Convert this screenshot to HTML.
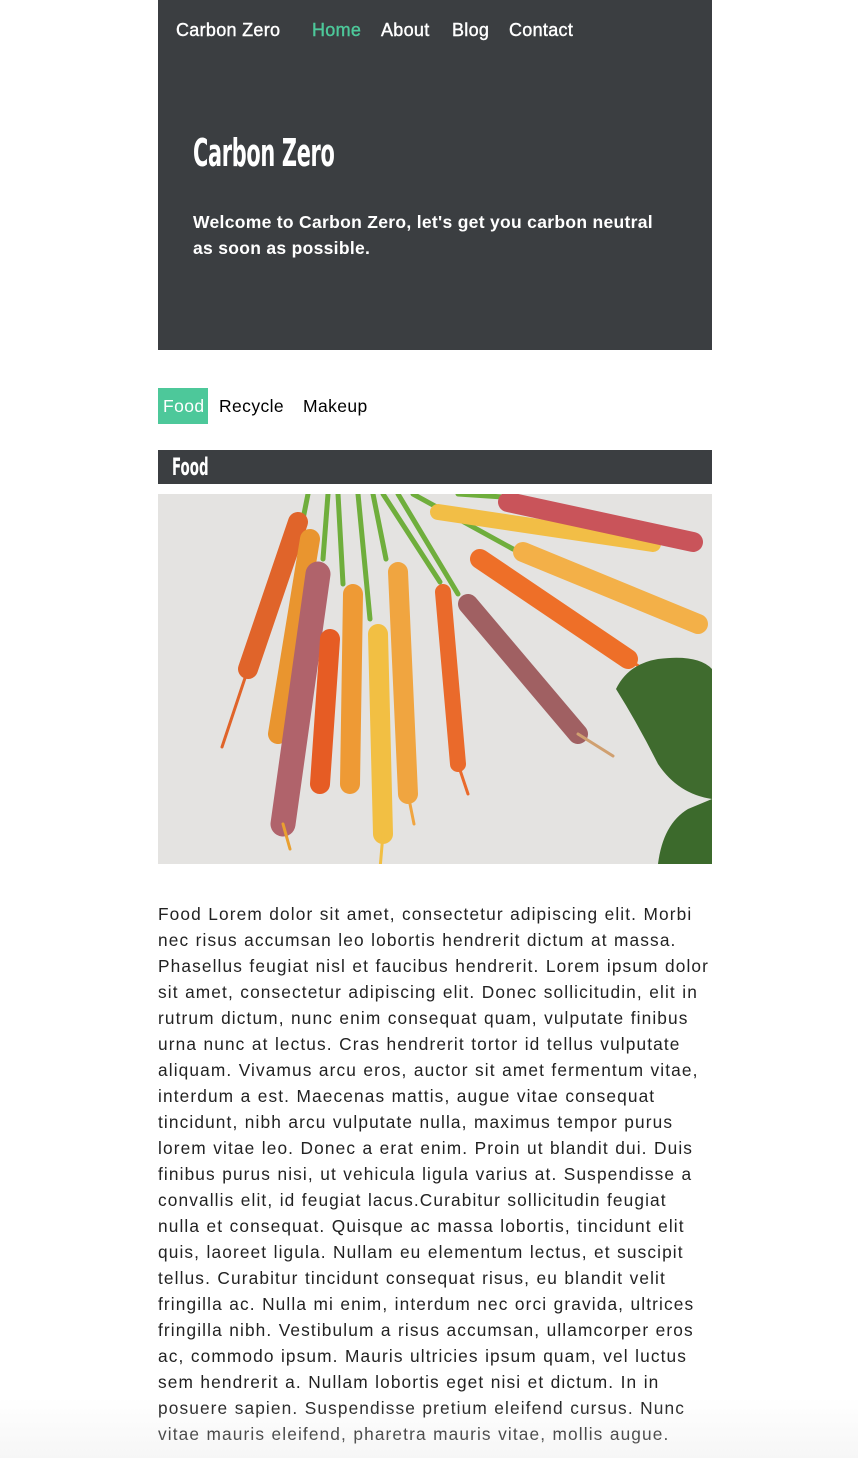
<!DOCTYPE html>
<html><head><meta charset="utf-8"><style>
*{margin:0;padding:0;box-sizing:border-box}
body{width:858px;height:1458px;background:#fff;font-family:"Liberation Sans",sans-serif;overflow:hidden;position:relative}
.wrap{position:absolute;left:158px;width:554px}
nav{position:absolute;top:20px;left:18px;font-size:18px;white-space:nowrap;letter-spacing:0.3px;-webkit-text-stroke:0.4px #fff}
nav span{position:absolute;top:0}
h1{position:absolute;left:35px;top:131px;font-family:"Liberation Sans Narrow","DejaVu Sans Condensed",sans-serif;font-weight:bold;font-size:38px;letter-spacing:-0.5px;transform:scaleX(.61);transform-origin:left}
.lead{position:absolute;left:35px;top:209px;width:478px;font-size:17.5px;font-weight:bold;line-height:26px;letter-spacing:0.3px}
.tabs{top:388px;height:36px;font-size:17.5px;letter-spacing:0.4px}
.tabs span{position:absolute;top:8px}
.food{position:absolute;left:0;top:0;width:50px;height:36px;background:#4dc89a}
.bar{top:450px;height:34px;background:#3b3e41;color:#fff}
.bar b{position:absolute;left:14px;top:3px;font-family:"Liberation Sans Narrow","DejaVu Sans Condensed",sans-serif;font-size:24px;transform:scaleX(.62);transform-origin:left}
.img{top:494px;height:370px}
p{top:901px;font-size:17.3px;line-height:26px;color:#222;letter-spacing:1.12px;word-spacing:0.5px}
.fade{position:absolute;left:0;top:1398px;width:858px;height:60px;background:linear-gradient(rgba(240,240,240,0),rgba(230,230,230,.35))}
</style></head><body>
<div class="wrap" style="top:0;height:350px;background:#3b3e41;color:#fff">
<nav><span style="left:0">Carbon Zero</span><span style="left:136px;color:#4dc89a;-webkit-text-stroke:0.4px #4dc89a">Home</span><span style="left:205px">About</span><span style="left:276px">Blog</span><span style="left:333px">Contact</span></nav>
<h1>Carbon Zero</h1>
<div class="lead">Welcome to Carbon Zero, let's get you carbon neutral as soon as possible.</div>
</div>
<div class="wrap tabs"><div class="food"></div><span style="left:5px;color:#fff">Food</span><span style="left:61px">Recycle</span><span style="left:145px">Makeup</span></div>
<div class="wrap bar"><b>Food</b></div>
<div class="wrap img"><svg width="554" height="370" viewBox="0 0 554 370">
<rect width="554" height="370" fill="#e4e3e1"/>
<g stroke-linecap="round" fill="none">
<g stroke="#6fae3c" stroke-width="5"><line x1="150" y1="0" x2="145" y2="25"/><line x1="170" y1="0" x2="165" y2="65"/><line x1="180" y1="0" x2="185" y2="90"/><line x1="200" y1="0" x2="212" y2="125"/><line x1="215" y1="0" x2="228" y2="65"/><line x1="225" y1="0" x2="282" y2="88"/><line x1="240" y1="0" x2="300" y2="100"/><line x1="255" y1="0" x2="355" y2="55"/><line x1="300" y1="0" x2="345" y2="3"/></g>
<g stroke-width="20"><line x1="140" y1="28" x2="90" y2="175" stroke="#e0642a"/><line x1="152" y1="45" x2="120" y2="240" stroke="#e9952f"/><line x1="160" y1="80" x2="125" y2="330" stroke="#b0636b" stroke-width="25"/><line x1="172" y1="145" x2="162" y2="290" stroke="#e65c24"/><line x1="195" y1="100" x2="192" y2="290" stroke="#ee9a35"/><line x1="220" y1="140" x2="225" y2="340" stroke="#f2bf43"/><line x1="240" y1="78" x2="250" y2="300" stroke="#f0a540"/><line x1="285" y1="98" x2="300" y2="270" stroke="#ea6a2b" stroke-width="16"/><line x1="310" y1="110" x2="420" y2="240" stroke="#a06062" stroke-width="20"/><line x1="322" y1="65" x2="470" y2="165" stroke="#ee6f28" stroke-width="20"/><line x1="365" y1="58" x2="540" y2="130" stroke="#f3b048"/><line x1="280" y1="18" x2="495" y2="50" stroke="#f2be46" stroke-width="16"/><line x1="350" y1="8" x2="535" y2="48" stroke="#c9545a" stroke-width="20"/></g>
<g stroke-width="3"><line x1="90" y1="175" x2="64" y2="253" stroke="#e0642a"/><line x1="125" y1="330" x2="132" y2="355" stroke="#e9a030"/><line x1="300" y1="270" x2="310" y2="300" stroke="#ea6a2b"/><line x1="225" y1="340" x2="222" y2="375" stroke="#f2bf43"/><line x1="250" y1="300" x2="256" y2="330" stroke="#f0a540"/><line x1="420" y1="240" x2="455" y2="262" stroke="#d0a070"/><line x1="470" y1="165" x2="485" y2="175" stroke="#ee6f28"/></g>
</g>
<path d="M458 195 Q470 170 500 165 Q540 160 554 175 L554 305 Q520 300 500 270 Q480 230 458 195Z" fill="#3f6b2e"/>
<path d="M500 370 Q505 330 530 315 L554 305 L554 370Z" fill="#3c6a2c"/>
</svg></div>
<p class="wrap">Food Lorem dolor sit amet, consectetur adipiscing elit. Morbi nec risus accumsan leo lobortis hendrerit dictum at massa. Phasellus feugiat nisl et faucibus hendrerit. Lorem ipsum dolor sit amet, consectetur adipiscing elit. Donec sollicitudin, elit in rutrum dictum, nunc enim consequat quam, vulputate finibus urna nunc at lectus. Cras hendrerit tortor id tellus vulputate aliquam. Vivamus arcu eros, auctor sit amet fermentum vitae, interdum a est. Maecenas mattis, augue vitae consequat tincidunt, nibh arcu vulputate nulla, maximus tempor purus lorem vitae leo. Donec a erat enim. Proin ut blandit dui. Duis finibus purus nisi, ut vehicula ligula varius at. Suspendisse a convallis elit, id feugiat lacus.Curabitur sollicitudin feugiat nulla et consequat. Quisque ac massa lobortis, tincidunt elit quis, laoreet ligula. Nullam eu elementum lectus, et suscipit tellus. Curabitur tincidunt consequat risus, eu blandit velit fringilla ac. Nulla mi enim, interdum nec orci gravida, ultrices fringilla nibh. Vestibulum a risus accumsan, ullamcorper eros ac, commodo ipsum. Mauris ultricies ipsum quam, vel luctus sem hendrerit a. Nullam lobortis eget nisi et dictum. In in posuere sapien. Suspendisse pretium eleifend cursus. Nunc vitae mauris eleifend, pharetra mauris vitae, mollis augue.</p>
<div class="fade"></div>
</body></html>
